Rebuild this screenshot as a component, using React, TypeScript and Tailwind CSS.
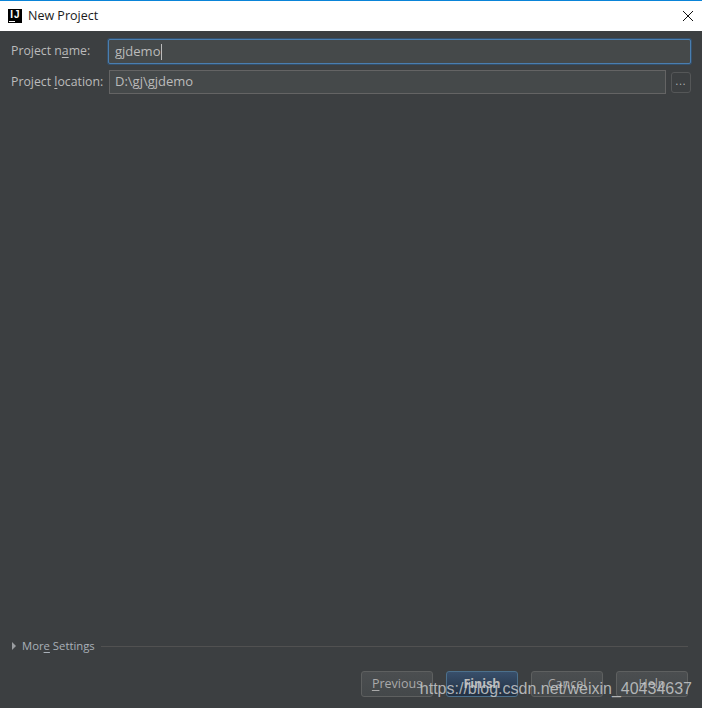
const FONT = "font-['Open_Sans','Noto_Sans',sans-serif]";

function FooterButton({ children, primary = false }: { children: React.ReactNode; primary?: boolean }) {
  return (
    <button
      className={`flex h-[26px] w-[72px] items-center justify-center rounded-[3px] border text-[12.5px] ${
        primary
          ? 'border-[#4c708c] bg-gradient-to-b from-[#384f6b] to-[#233143] font-bold text-[#bbbbbb]'
          : 'border-[#5e6060] bg-gradient-to-b from-[#4b4e50] to-[#44484a] text-[#a9a9a9]'
      }`}
    >
      {children}
    </button>
  );
}

export default function App() {
  return (
    <div className={`relative flex h-[708px] w-[702px] flex-col overflow-hidden bg-[#3c3f41] ${FONT}`}>
      {/* Title bar */}
      <div className="flex h-[31px] items-center border-t border-t-[#0a84d8] bg-white pr-[8px] pl-[8px]">
        <div className="relative flex h-[14px] w-[14px] justify-center gap-[1px] bg-black pt-[1px] font-['Liberation_Sans',sans-serif] text-[10px] leading-[9px] font-bold text-white">
          <span>I</span>
          <span>J</span>
          <div className="absolute bottom-[1px] left-[1px] h-px w-[6px] bg-white" />
        </div>
        <span className="ml-[6px] text-[12.5px] text-[#1a1a1a]">New Project</span>
        <svg className="ml-auto" width="12" height="12" viewBox="0 0 12 12" fill="none" stroke="#111" strokeWidth="1">
          <path d="M1 1L11 11M11 1L1 11" />
        </svg>
      </div>

      {/* Form */}
      <div className="flex flex-col pt-[8px] pr-[11px] pl-[11px] text-[13px] text-[#bbbbbb]">
        <div className="flex h-[25px] items-center">
          <span className="w-[97px] text-[12.3px]">
            Project n<span className="underline underline-offset-2">a</span>me:
          </span>
          <div className="flex h-[25px] flex-1 items-center rounded-[2px] border border-[#4a7eb0] bg-[#45494a] pl-[6px] shadow-[0_0_0_1px_#34506b]">
            gjdemo
            <span className="ml-px h-[16px] w-px bg-[#bbbbbb]" />
          </div>
        </div>
        <div className="mt-[6px] flex h-[24px] items-center">
          <span className="w-[98px] text-[12.3px]">
            Project <span className="underline underline-offset-2">l</span>ocation:
          </span>
          <div className="flex h-[24px] flex-1 items-center border border-[#646464] bg-[#45494a] pl-[5px]">D:\gj\gjdemo</div>
          <button className="ml-[5px] flex h-[21px] w-[20px] items-center justify-center rounded-[3px] border border-[#555758] bg-[#3c3f41] pb-[3px] text-[10px] leading-none tracking-[1px]">
            ...
          </button>
        </div>
      </div>

      {/* More settings */}
      <div className="mt-auto flex h-[16px] items-center pr-[14px] pl-[12px] text-[11.3px] text-[#a9b0b8]">
        <svg width="4" height="8" viewBox="0 0 4 8" fill="#9a9da0">
          <path d="M0 0L4 4L0 8Z" />
        </svg>
        <span className="ml-[6px]">
          Mor<span className="underline underline-offset-2">e</span> Settings
        </span>
        <div className="ml-[6px] h-px flex-1 bg-[#515151]" />
      </div>

      {/* Footer buttons */}
      <div className="mt-[17px] mb-[11px] flex justify-end gap-[13px] pr-[14px]">
        <FooterButton>
          <span className="underline underline-offset-2">P</span>revious
        </FooterButton>
        <FooterButton primary>Finish</FooterButton>
        <FooterButton>Cancel</FooterButton>
        <FooterButton>Help</FooterButton>
      </div>

      {/* Watermark */}
      <span className="absolute top-[678px] right-[10px] font-['Liberation_Sans',sans-serif] text-[16px] leading-[22px] text-[#c8cacb]/85">
        https://blog.csdn.net/weixin_40434637
      </span>
    </div>
  );
}
